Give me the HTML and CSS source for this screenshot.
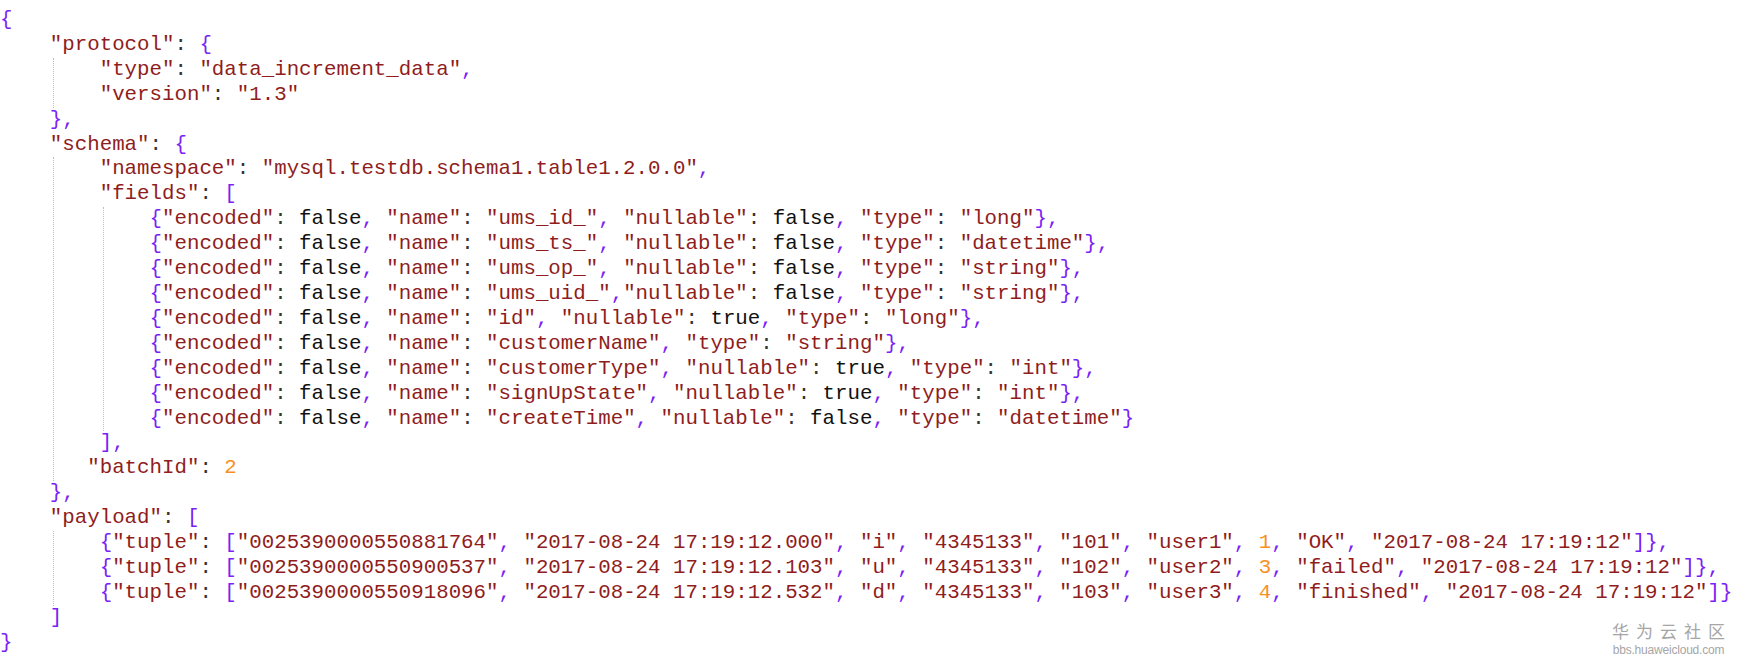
FILE: index.html
```html
<!DOCTYPE html>
<html>
<head>
<meta charset="utf-8">
<link rel="stylesheet" href="styles.css">
</head>
<body>
<div class="editor">
  <div class="ln"><span class="p">{</span></div>
  <div class="blk">
    <div class="ln"><span class="s">"protocol"</span><span class="o">: </span><span class="p">{</span></div>
    <div class="blk g">
      <div class="ln"><span class="s">"type"</span><span class="o">: </span><span class="s">"data_increment_data"</span><span class="p">,</span></div>
      <div class="ln"><span class="s">"version"</span><span class="o">: </span><span class="s">"1.3"</span></div>
    </div>
    <div class="ln"><span class="p">},</span></div>
    <div class="ln"><span class="s">"schema"</span><span class="o">: </span><span class="p">{</span></div>
    <div class="blk g">
      <div class="ln"><span class="s">"namespace"</span><span class="o">: </span><span class="s">"mysql.testdb.schema1.table1.2.0.0"</span><span class="p">,</span></div>
      <div class="ln"><span class="s">"fields"</span><span class="o">: </span><span class="p">[</span></div>
      <div class="blk g">
        <div class="ln"><span class="p">{</span><span class="s">"encoded"</span><span class="o">: </span><span class="b">false</span><span class="p">, </span><span class="s">"name"</span><span class="o">: </span><span class="s">"ums_id_"</span><span class="p">, </span><span class="s">"nullable"</span><span class="o">: </span><span class="b">false</span><span class="p">, </span><span class="s">"type"</span><span class="o">: </span><span class="s">"long"</span><span class="p">},</span></div>
        <div class="ln"><span class="p">{</span><span class="s">"encoded"</span><span class="o">: </span><span class="b">false</span><span class="p">, </span><span class="s">"name"</span><span class="o">: </span><span class="s">"ums_ts_"</span><span class="p">, </span><span class="s">"nullable"</span><span class="o">: </span><span class="b">false</span><span class="p">, </span><span class="s">"type"</span><span class="o">: </span><span class="s">"datetime"</span><span class="p">},</span></div>
        <div class="ln"><span class="p">{</span><span class="s">"encoded"</span><span class="o">: </span><span class="b">false</span><span class="p">, </span><span class="s">"name"</span><span class="o">: </span><span class="s">"ums_op_"</span><span class="p">, </span><span class="s">"nullable"</span><span class="o">: </span><span class="b">false</span><span class="p">, </span><span class="s">"type"</span><span class="o">: </span><span class="s">"string"</span><span class="p">},</span></div>
        <div class="ln"><span class="p">{</span><span class="s">"encoded"</span><span class="o">: </span><span class="b">false</span><span class="p">, </span><span class="s">"name"</span><span class="o">: </span><span class="s">"ums_uid_"</span><span class="p">,</span><span class="s">"nullable"</span><span class="o">: </span><span class="b">false</span><span class="p">, </span><span class="s">"type"</span><span class="o">: </span><span class="s">"string"</span><span class="p">},</span></div>
        <div class="ln"><span class="p">{</span><span class="s">"encoded"</span><span class="o">: </span><span class="b">false</span><span class="p">, </span><span class="s">"name"</span><span class="o">: </span><span class="s">"id"</span><span class="p">, </span><span class="s">"nullable"</span><span class="o">: </span><span class="b">true</span><span class="p">, </span><span class="s">"type"</span><span class="o">: </span><span class="s">"long"</span><span class="p">},</span></div>
        <div class="ln"><span class="p">{</span><span class="s">"encoded"</span><span class="o">: </span><span class="b">false</span><span class="p">, </span><span class="s">"name"</span><span class="o">: </span><span class="s">"customerName"</span><span class="p">, </span><span class="s">"type"</span><span class="o">: </span><span class="s">"string"</span><span class="p">},</span></div>
        <div class="ln"><span class="p">{</span><span class="s">"encoded"</span><span class="o">: </span><span class="b">false</span><span class="p">, </span><span class="s">"name"</span><span class="o">: </span><span class="s">"customerType"</span><span class="p">, </span><span class="s">"nullable"</span><span class="o">: </span><span class="b">true</span><span class="p">, </span><span class="s">"type"</span><span class="o">: </span><span class="s">"int"</span><span class="p">},</span></div>
        <div class="ln"><span class="p">{</span><span class="s">"encoded"</span><span class="o">: </span><span class="b">false</span><span class="p">, </span><span class="s">"name"</span><span class="o">: </span><span class="s">"signUpState"</span><span class="p">, </span><span class="s">"nullable"</span><span class="o">: </span><span class="b">true</span><span class="p">, </span><span class="s">"type"</span><span class="o">: </span><span class="s">"int"</span><span class="p">},</span></div>
        <div class="ln"><span class="p">{</span><span class="s">"encoded"</span><span class="o">: </span><span class="b">false</span><span class="p">, </span><span class="s">"name"</span><span class="o">: </span><span class="s">"createTime"</span><span class="p">, </span><span class="s">"nullable"</span><span class="o">: </span><span class="b">false</span><span class="p">, </span><span class="s">"type"</span><span class="o">: </span><span class="s">"datetime"</span><span class="p">}</span></div>
      </div>
      <div class="ln"><span class="p">],</span></div>
      <div class="ln out1"><span class="s">"batchId"</span><span class="o">: </span><span class="n">2</span></div>
    </div>
    <div class="ln"><span class="p">},</span></div>
    <div class="ln"><span class="s">"payload"</span><span class="o">: </span><span class="p">[</span></div>
    <div class="blk g">
      <div class="ln"><span class="p">{</span><span class="s">"tuple"</span><span class="o">: </span><span class="p">[</span><span class="s">"0025390000550881764"</span><span class="p">, </span><span class="s">"2017-08-24 17:19:12.000"</span><span class="p">, </span><span class="s">"i"</span><span class="p">, </span><span class="s">"4345133"</span><span class="p">, </span><span class="s">"101"</span><span class="p">, </span><span class="s">"user1"</span><span class="p">, </span><span class="n">1</span><span class="p">, </span><span class="s">"OK"</span><span class="p">, </span><span class="s">"2017-08-24 17:19:12"</span><span class="p">]},</span></div>
      <div class="ln"><span class="p">{</span><span class="s">"tuple"</span><span class="o">: </span><span class="p">[</span><span class="s">"0025390000550900537"</span><span class="p">, </span><span class="s">"2017-08-24 17:19:12.103"</span><span class="p">, </span><span class="s">"u"</span><span class="p">, </span><span class="s">"4345133"</span><span class="p">, </span><span class="s">"102"</span><span class="p">, </span><span class="s">"user2"</span><span class="p">, </span><span class="n">3</span><span class="p">, </span><span class="s">"failed"</span><span class="p">, </span><span class="s">"2017-08-24 17:19:12"</span><span class="p">]},</span></div>
      <div class="ln"><span class="p">{</span><span class="s">"tuple"</span><span class="o">: </span><span class="p">[</span><span class="s">"0025390000550918096"</span><span class="p">, </span><span class="s">"2017-08-24 17:19:12.532"</span><span class="p">, </span><span class="s">"d"</span><span class="p">, </span><span class="s">"4345133"</span><span class="p">, </span><span class="s">"103"</span><span class="p">, </span><span class="s">"user3"</span><span class="p">, </span><span class="n">4</span><span class="p">, </span><span class="s">"finished"</span><span class="p">, </span><span class="s">"2017-08-24 17:19:12"</span><span class="p">]}</span></div>
    </div>
    <div class="ln"><span class="p">]</span></div>
  </div>
  <div class="ln"><span class="p">}</span></div>
</div>
<div class="wm">
  <div class="wm-cn">华为云社区</div>
  <div class="wm-url">bbs.huaweicloud.com</div>
</div>
</body>
</html>
```

FILE: styles.css
```css
html, body {
  margin: 0;
  padding: 0;
  background: #ffffff;
}
body {
  position: relative;
  width: 1739px;
  height: 662px;
  overflow: hidden;
}
.editor {
  font-family: "Liberation Mono", "Courier New", monospace;
  font-size: 20.77px;
  line-height: 24.92px;
  padding: 8px 0 0 0;
  color: #1a1a1a;
}
.ln {
  white-space: pre;
  height: 24.92px;
}
.blk {
  margin-left: 4ch;
}
.blk.g {
  margin-left: 3px;
  padding-left: calc(4ch - 4px);
  border-left: 1px dotted #bdbdbd;
}
.out1 {
  margin-left: -1ch;
}
.s { color: #8f1d1d; }
.p { color: #7a22f5; }
.o { color: #333333; }
.b { color: #111111; }
.n { color: #f8901f; }
.wm {
  position: absolute;
  right: 14px;
  bottom: 5px;
  color: #a6a6a6;
  text-align: center;
}
.wm-cn {
  font-family: "Noto Sans CJK SC", sans-serif;
  font-size: 17px;
  line-height: 20px;
  letter-spacing: 7px;
  margin-right: -7px;
}
.wm-url {
  font-family: "Liberation Sans", sans-serif;
  font-size: 12px;
  line-height: 14px;
  margin-top: 2px;
  letter-spacing: -0.2px;
}
```
